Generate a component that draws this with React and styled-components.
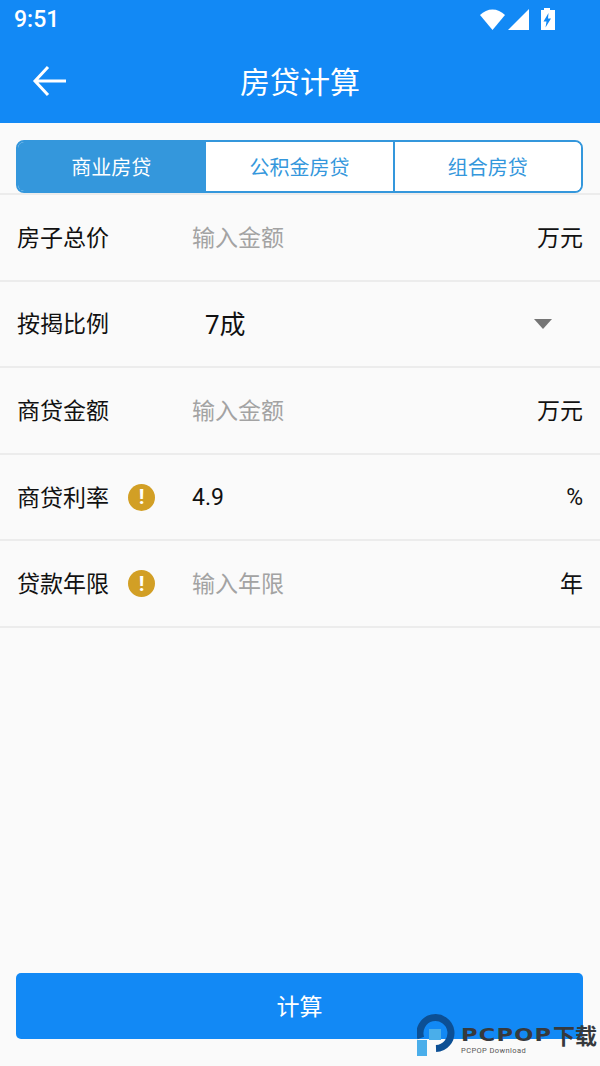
import React from 'react'
import styled, { createGlobalStyle } from 'styled-components'

const GlobalStyle = createGlobalStyle`
  html, body {
    margin: 0;
    padding: 0;
    background: #fafafa;
  }
  * {
    box-sizing: border-box;
  }
`

const Page = styled.div`
  position: relative;
  width: 600px;
  height: 1066px;
  overflow: hidden;
  display: flex;
  flex-direction: column;
  background: #fafafa;
  font-family: Roboto, "Noto Sans CJK SC", sans-serif;
`

const Header = styled.header`
  height: 123px;
  background: #1289f5;
  color: #fff;
  flex-shrink: 0;
`

const StatusBar = styled.div`
  height: 41px;
  padding: 0 45px 2px 14px;
  display: flex;
  align-items: center;
  justify-content: space-between;
`

const Time = styled.span`
  font-size: 23px;
  font-weight: 500;
`

const StatusIcons = styled.div`
  display: flex;
  align-items: center;
`

const TitleBar = styled.div`
  position: relative;
  height: 82px;
  display: flex;
  align-items: center;
  justify-content: center;
  padding-bottom: 5px;
`

const BackButton = styled.div`
  position: absolute;
  left: 29px;
  top: 21px;
  width: 40px;
  height: 38px;
`

const Title = styled.h1`
  margin: 0;
  font-size: 30px;
  font-weight: 400;
`

const Tabs = styled.div`
  margin: 17px 17px 0 16px;
  height: 53px;
  display: flex;
  border: 2px solid #3497dc;
  border-radius: 8px;
  overflow: hidden;
  background: #fff;
`

const Tab = styled.div`
  flex: 1;
  display: flex;
  align-items: center;
  justify-content: center;
  font-size: 20px;
  color: ${(p) => (p.$active ? '#fff' : '#3497dc')};
  background: ${(p) => (p.$active ? '#3497dc' : '#fff')};
  border-left: ${(p) => (p.$first ? 'none' : '2px solid #3497dc')};
`

const Form = styled.div`
  border-top: 2px solid #ececec;
`

const Row = styled.div`
  height: 86.6px;
  padding: 0 17px;
  display: flex;
  align-items: center;
  border-bottom: 2px solid #ececec;
  font-size: 23px;
  color: #111;
`

const Label = styled.div`
  width: 111px;
  flex-shrink: 0;
  padding-bottom: 3px;
`

const InfoSlot = styled.div`
  width: 64px;
  flex-shrink: 0;
  display: flex;
`

const InfoBadge = styled.div`
  width: 27px;
  height: 27px;
  border-radius: 50%;
  background: #d29f25;
  color: #fff;
  display: flex;
  align-items: center;
  justify-content: center;
  font-size: 21px;
  font-weight: 700;
`

const Value = styled.div`
  flex: 1;
  font-size: ${(p) => (p.$large ? '26px' : '23px')};
  color: ${(p) => (p.$placeholder ? '#a3a3a3' : '#111')};
  padding-left: ${(p) => (p.$large ? '13px' : '0')};
  padding-bottom: ${(p) => (p.$numeric ? '0' : '3px')};
`

const Unit = styled.div`
  color: #111;
  padding-bottom: ${(p) => (p.$numeric ? '0' : '3px')};
`

const Caret = styled.div`
  width: 0;
  height: 0;
  margin-right: 31px;
  border-left: 9px solid transparent;
  border-right: 9px solid transparent;
  border-top: 10px solid #757575;
`

const Spacer = styled.div`
  flex: 1;
`

const Submit = styled.div`
  margin: 0 17px 27px 16px;
  height: 66px;
  padding-bottom: 2px;
  border-radius: 5px;
  background: #1289f5;
  color: #fff;
  font-size: 23px;
  display: flex;
  align-items: center;
  justify-content: center;
`

const Watermark = styled.div`
  position: absolute;
  left: 417px;
  top: 1013px;
  display: flex;
  align-items: flex-start;
`

const WatermarkText = styled.div`
  margin-left: 6px;
  padding-top: 9px;
  display: flex;
  flex-direction: column;
`

const WatermarkName = styled.div`
  display: flex;
  align-items: center;
  height: 24px;
  white-space: nowrap;
  color: #36393d;
`

const WatermarkLatin = styled.span`
  display: inline-block;
  font-family: "DejaVu Sans", sans-serif;
  font-size: 18px;
  font-weight: 700;
  letter-spacing: 1px;
  transform: scaleX(1.25);
  transform-origin: left center;
  margin-right: 19px;
`

const WatermarkCjk = styled.span`
  font-family: "Noto Sans CJK SC", sans-serif;
  font-size: 22px;
  font-weight: 700;
`

const WatermarkSub = styled.div`
  font-size: 7.500px;
  line-height: 9px;
  letter-spacing: 0.400px;
  white-space: nowrap;
  color: #555;
`

const rows = [
  { label: '房子总价', value: '输入金额', placeholder: true, unit: '万元' },
  { label: '按揭比例', value: '7成', large: true, caret: true },
  { label: '商贷金额', value: '输入金额', placeholder: true, unit: '万元' },
  { label: '商贷利率', value: '4.9', numeric: true, info: true, unit: '%' },
  { label: '贷款年限', value: '输入年限', placeholder: true, info: true, unit: '年' },
]

const App = () => {
  return (
    <Page>
      <GlobalStyle />
      <Header>
        <StatusBar>
          <Time>9:51</Time>
          <StatusIcons>
            <svg width="75" height="23" viewBox="0 0 75 23">
              <path d="M0 7C3.500 3.500 8 1.500 12.500 1.500S21.500 3.500 25 7L12.500 22Z" fill="#fff" />
              <path d="M28 22L49 1V22Z" fill="#fff" />
              <path fillRule="evenodd" d="M64 2V0H70V2H75V22H61V2ZM68.500 5L63.500 13.500H66.500L65.500 19.500L71 10.500H68Z" fill="#fff" />
            </svg>
          </StatusIcons>
        </StatusBar>
        <TitleBar>
          <BackButton>
            <svg width="40" height="38" viewBox="0 0 40 38">
              <path d="M37 19H7M19 5L6 19L19 33" fill="none" stroke="#fff" strokeWidth="3" />
            </svg>
          </BackButton>
          <Title>房贷计算</Title>
        </TitleBar>
      </Header>

      <Tabs>
        <Tab $active $first>商业房贷</Tab>
        <Tab>公积金房贷</Tab>
        <Tab>组合房贷</Tab>
      </Tabs>

      <Form>
        {rows.map((r) => (
          <Row key={r.label}>
            <Label>{r.label}</Label>
            <InfoSlot>{r.info && <InfoBadge>!</InfoBadge>}</InfoSlot>
            <Value $placeholder={r.placeholder} $large={r.large} $numeric={r.numeric}>{r.value}</Value>
            {r.unit && <Unit $numeric={r.unit === '%'}>{r.unit}</Unit>}
            {r.caret && <Caret />}
          </Row>
        ))}
      </Form>

      <Spacer />
      <Submit>计算</Submit>

      <Watermark>
        <svg width="38" height="44" viewBox="0 0 38 44">
          <path d="M3.800 25A15.500 15.500 0 1 1 19 35.500" fill="none" stroke="#0c4f94" strokeWidth="7" />
          <path d="M12 16H24V27H10V43H0V27H12Z" fill="#4aaeea" />
        </svg>
        <WatermarkText>
          <WatermarkName>
            <WatermarkLatin>PCPOP</WatermarkLatin>
            <WatermarkCjk>下载</WatermarkCjk>
          </WatermarkName>
          <WatermarkSub>PCPOP Download</WatermarkSub>
        </WatermarkText>
      </Watermark>
    </Page>
  )
}

export default App
